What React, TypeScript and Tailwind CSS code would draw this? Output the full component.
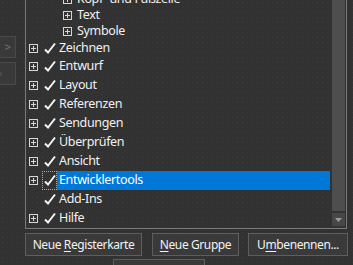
const FONT = "font-['Noto_Sans','Open_Sans',sans-serif]";

type Item = { label: string; level: 1 | 2; plus?: boolean; h: string; selected?: boolean };

const ITEMS: Item[] = [
  { label: "Kopf- und Fußzeile", level: 2, plus: true, h: "h-[16px]" },
  { label: "Text", level: 2, plus: true, h: "h-[16px]" },
  { label: "Symbole", level: 2, plus: true, h: "h-[16px]" },
  { label: "Zeichnen", level: 1, plus: true, h: "h-[18px]" },
  { label: "Entwurf", level: 1, plus: true, h: "h-[19px]" },
  { label: "Layout", level: 1, plus: true, h: "h-[19px]" },
  { label: "Referenzen", level: 1, plus: true, h: "h-[19px]" },
  { label: "Sendungen", level: 1, plus: true, h: "h-[19px]" },
  { label: "Überprüfen", level: 1, plus: true, h: "h-[19px]" },
  { label: "Ansicht", level: 1, plus: true, h: "h-[19px]" },
  { label: "Entwicklertools", level: 1, plus: true, h: "h-[19px]", selected: true },
  { label: "Add-Ins", level: 1, h: "h-[19px]" },
  { label: "Hilfe", level: 1, plus: true, h: "h-[19px]" },
];

function PlusBox() {
  return (
    <svg width="9" height="9" viewBox="0 0 9 9" className="shrink-0">
      <rect x="0.5" y="0.5" width="8" height="8" fill="none" stroke="#d6d6d6" />
      <path d="M2 4.5h5M4.5 2v5" stroke="#d6d6d6" />
    </svg>
  );
}

function Check() {
  return (
    <svg width="12" height="13" viewBox="0 0 12 13">
      <polyline points="1,7.5 4,10.5 11,1.5" fill="none" stroke="#f4f4f4" strokeWidth="2" />
    </svg>
  );
}

function Row({ item }: { item: Item }) {
  if (item.level === 2) {
    return (
      <div className={`flex items-center ${item.h}`}>
        <div className="w-[37px] shrink-0" />
        {item.plus ? <PlusBox /> : <div className="w-[9px]" />}
        <span className="pl-[5px] text-[12.5px] leading-none tracking-[-0.35px] whitespace-nowrap text-[#f0f0f0]">
          {item.label}
        </span>
      </div>
    );
  }
  return (
    <div className={`flex items-center ${item.h}`}>
      <div className="w-[3px] shrink-0" />
      {item.plus ? <PlusBox /> : <div className="w-[9px] shrink-0" />}
      <div className="w-[4px] shrink-0" />
      <div
        className={`flex h-full w-[15px] shrink-0 items-center justify-center ${
          item.selected ? "border border-dotted border-[#f0a030]" : ""
        }`}
      >
        <Check />
      </div>
      <div
        className={`flex h-full flex-1 items-center pl-[2px] text-[12.5px] leading-none tracking-[-0.35px] whitespace-nowrap text-[#f0f0f0] ${
          item.selected ? "bg-[#0078d7] text-white" : ""
        }`}
      >
        {item.label}
      </div>
    </div>
  );
}

function Btn({ w, children }: { w: string; children: React.ReactNode }) {
  return (
    <div
      className={`flex h-[23px] ${w} shrink-0 items-center justify-center border border-[#5e5e5e] bg-[#3a3a3a] text-[12px] leading-none tracking-[-0.4px] text-[#f2f2f2]`}
    >
      <span className="whitespace-nowrap">{children}</span>
    </div>
  );
}

export default function App() {
  return (
    <div
      className={`${FONT} flex h-[265px] w-[353px] flex-col overflow-hidden bg-[#323232] bg-[radial-gradient(#3b3b3b_0.8px,transparent_0.8px)] bg-[size:5px_5px]`}
    >
      <div className="flex h-[229px] shrink-0">
        {/* left strip with cut-off buttons */}
        <div className="flex w-[25px] shrink-0 flex-col">
          <div className="h-[36px]" />
          <div className="-ml-[10px] flex h-[22px] w-[26px] items-center justify-end border border-[#4a4a4a] bg-[#393939] pr-[4px] text-[11px] text-[#777]">
            &gt;
          </div>
          <div className="h-[4px]" />
          <div className="-ml-[10px] flex h-[23px] w-[26px] items-center border border-[#4a4a4a] bg-[#393939] pl-[8px] text-[11px] text-[#6b4a4a]">
            ‹
          </div>
        </div>

        {/* tree list */}
        <div className="flex w-[322px] shrink-0 border-r border-b border-l border-[#7a7a7a]">
          <div className="flex flex-1 flex-col pr-[2px]">
            <div className="-mt-[9px]">
              {ITEMS.map((it) => (
                <Row key={it.label} item={it} />
              ))}
            </div>
          </div>
          <div className="flex w-[13px] shrink-0 flex-col">
            <div className="h-[211px] bg-[#4e4e4e]" />
            <div className="h-[2px]" />
            <div className="flex h-[13px] items-center justify-center bg-[#474747]">
              <svg width="7" height="4" viewBox="0 0 7 4">
                <path d="M0 0h7L3.5 4z" fill="#9a9a9a" />
              </svg>
            </div>
          </div>
          <div className="w-px shrink-0" />
        </div>
      </div>

      <div className="h-[4px] shrink-0" />

      <div className="flex shrink-0 pl-[25px]">
        <Btn w="w-[117px]">
          Neue <span className="underline underline-offset-2">R</span>egisterkarte
        </Btn>
        <div className="w-[10px]" />
        <Btn w="w-[87px]">
          <span className="underline underline-offset-2">N</span>eue Gruppe
        </Btn>
        <div className="w-[9px]" />
        <Btn w="w-[100px]">
          U<span className="underline underline-offset-2">m</span>benennen...
        </Btn>
      </div>

      <div className="h-[3px] shrink-0" />
      <div className="flex shrink-0 pl-[113px]">
        <div className="h-[23px] w-[92px] border border-[#5e5e5e] bg-[#3a3a3a]" />
      </div>
    </div>
  );
}
